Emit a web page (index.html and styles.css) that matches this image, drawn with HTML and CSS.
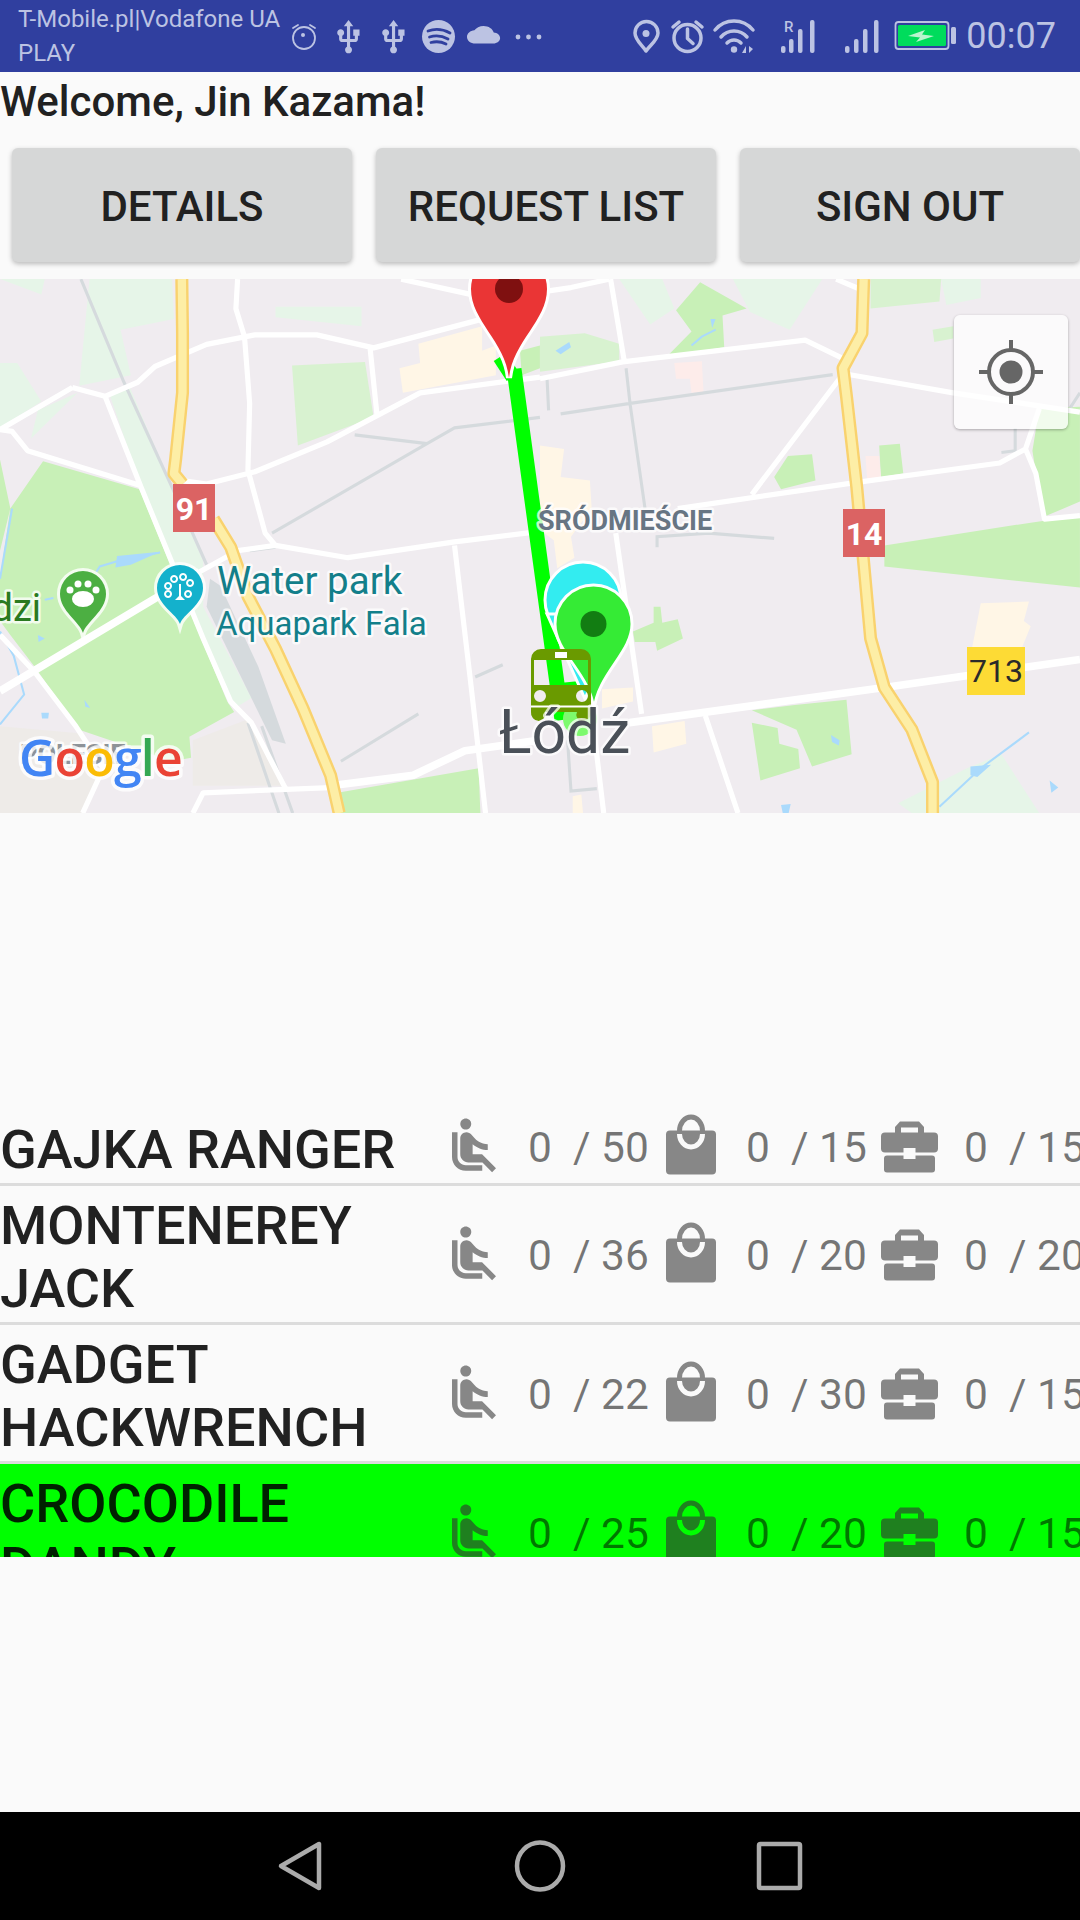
FILE: index.html
```html
<!DOCTYPE html>
<html lang="en">
<head>
<meta charset="utf-8">
<title>Driver panel</title>
<link rel="stylesheet" href="styles.css">
</head>
<body>
<svg class="defs" width="0" height="0" aria-hidden="true">
  <symbol id="seat" viewBox="0 0 24 24">
    <path class="ico" d="M7.59 5.41c-.78-.78-.78-2.05 0-2.83.78-.78 2.05-.78 2.83 0 .78.78.78 2.05 0 2.83-.79.79-2.05.79-2.83 0zM6 16V7H4v9c0 2.76 2.24 5 5 5h6v-2H9c-1.66 0-3-1.34-3-3zm14 4.07L14.93 15H11.5v-3.68c1.4 1.15 3.6 2.16 5.5 2.16v-2.16c-1.66.02-3.61-.87-4.67-2.04l-1.4-1.55c-.19-.21-.43-.38-.69-.5-.29-.14-.62-.23-.96-.23h-.03C8.01 7 7 8.01 7 9.25V15c0 1.66 1.34 3 3 3h5.07l3.5 3.5L20 20.07z"/>
  </symbol>
  <symbol id="bag" viewBox="0 0 66 66">
    <rect class="ico" x="7" y="17.5" width="50" height="44" rx="4"/>
    <path class="ico-line" d="M20.5 18A11.5 14 0 0 1 43.5 18"/>
    <path class="ico-hole" d="M20.5 21A11.5 13 0 0 0 43.5 21"/>
  </symbol>
  <symbol id="case" viewBox="0 0 66 66">
    <path class="ico" d="M18 20V14L23 8.5H42L47 14V20H41V14.500H24V20Z"/>
    <rect class="ico" x="4" y="19.500" width="57" height="20" rx="4"/>
    <rect class="ico" x="7" y="42.500" width="51" height="17" rx="3"/>
    <rect class="ico-hole-fill" x="26.500" y="35" width="12" height="11"/>
  </symbol>
</svg>

<header class="status-bar">
  <div class="carrier">T-Mobile.pl|Vodafone UA<br>PLAY</div>
  <svg class="status-left" width="260" height="72" viewBox="288 0 260 72">
    <circle class="st-line thin" cx="304" cy="38" r="11"/>
    <path class="st-line thin" d="M293 28l5-3M315 28l-5-3"/>
    <circle class="st-fill" cx="303" cy="35" r="2"/>
    <path class="st-fill" transform="translate(329.700 18.500) scale(1.570)" d="M15 7v4h1v2h-3V5h2l-3-4-3 4h2v8H8v-2.070c.7-.37 1.200-1.080 1.200-1.930 0-1.210-.99-2.200-2.200-2.200-1.210 0-2.200.99-2.200 2.200 0 .85.5 1.560 1.200 1.930V13c0 1.110.89 2 2 2h3v3.050c-.71.37-1.200 1.100-1.200 1.950 0 1.220.99 2.200 2.200 2.200 1.210 0 2.200-.98 2.200-2.200 0-.85-.49-1.580-1.200-1.950V15h3c1.110 0 2-.89 2-2v-2h1V7h-4z"/>
    <path class="st-fill" transform="translate(374.700 18.500) scale(1.570)" d="M15 7v4h1v2h-3V5h2l-3-4-3 4h2v8H8v-2.070c.7-.37 1.200-1.080 1.200-1.930 0-1.210-.99-2.200-2.200-2.200-1.210 0-2.200.99-2.200 2.200 0 .85.5 1.560 1.200 1.930V13c0 1.110.89 2 2 2h3v3.050c-.71.37-1.200 1.100-1.200 1.950 0 1.220.99 2.200 2.200 2.200 1.210 0 2.200-.98 2.200-2.200 0-.85-.49-1.580-1.200-1.950V15h3c1.110 0 2-.89 2-2v-2h1V7h-4z"/>
    <circle class="st-fill" cx="438.500" cy="36.500" r="16.500"/>
    <path class="st-cut" d="M428 31Q439 27 450 33M429.500 37Q439 34 448 39M431 42.500Q439 40.500 446 44"/>
    <path class="st-fill" transform="translate(467 21.500) scale(1.380 1.100)" d="M19.350 10.040C18.670 6.590 15.640 4 12 4 9.110 4 6.600 5.640 5.350 8.040 2.340 8.360 0 10.910 0 14c0 3.310 2.690 6 6 6h13c2.760 0 5-2.240 5-5 0-2.640-2.050-4.780-4.650-4.960z"/>
    <circle class="st-fill" cx="518" cy="37" r="2.400"/>
    <circle class="st-fill" cx="528.500" cy="37" r="2.400"/>
    <circle class="st-fill" cx="539" cy="37" r="2.400"/>
  </svg>
  <svg class="status-right" width="330" height="72" viewBox="630 0 330 72">
    <path class="st-line" d="M647 51C643 45 636 40 636 33A11.500 11.500 0 0 1 659 33C659 40 651 45 647 51Z"/>
    <circle class="st-fill" cx="647" cy="33.500" r="3.500"/>
    <circle class="st-line" cx="688.500" cy="38" r="13.500"/>
    <path class="st-line" d="M674 27l6-5M703 27l-6-5M688.500 29v9.500l5.500 5"/>
    <path class="st-line" d="M716 30C726 18 744 18 754 30M722 37C729 29 741 29 748 37M728 43C732 39 738 39 742 43"/>
    <circle class="st-fill" cx="735" cy="49.500" r="3.200"/>
    <path class="st-fill" d="M743 53l4-7v7ZM750 46l4 3-4 4Z"/>
    <text class="st-r" x="785" y="32">R</text>
    <rect class="st-fill" x="782" y="46" width="4.500" height="7" rx="2"/>
    <rect class="st-fill" x="790" y="39" width="4.500" height="14" rx="2"/>
    <rect class="st-fill" x="799" y="29" width="4.500" height="24" rx="2"/>
    <rect class="st-fill" x="811" y="20" width="4.500" height="33" rx="2"/>
    <rect class="st-fill" x="846" y="46" width="4.500" height="7" rx="2"/>
    <rect class="st-fill" x="855" y="39" width="4.500" height="14" rx="2"/>
    <rect class="st-fill" x="864" y="29" width="4.500" height="24" rx="2"/>
    <rect class="st-fill" x="875" y="20" width="4.500" height="33" rx="2"/>
    <rect class="st-line thin" x="896.500" y="22" width="53" height="27" rx="3"/>
    <rect class="bat-level" x="899" y="25" width="48" height="21" rx="1.500"/>
    <path class="bat-bolt" d="M909 36L926 30L923 34.500L935 36L917 42L921 37.500Z"/>
    <rect class="st-fill" x="952" y="27" width="5" height="17" rx="1.500"/>
  </svg>
  <div class="clock">00:07</div>
</header>

<main class="content">
  <div class="welcome">Welcome, Jin Kazama!</div>
  <nav class="actions">
    <button class="action">DETAILS</button>
    <button class="action">REQUEST LIST</button>
    <button class="action">SIGN OUT</button>
  </nav>

  <section class="map">
    <svg class="map-canvas" width="1080" height="534" viewBox="0 0 1080 534">
      <rect class="land" width="1080" height="534"/>

      <g transform="translate(0 -9) scale(0.34435 0.35088)">
        <path class="park-faint" d="M260 26L500 26L505 140L350 170L380 300L230 330ZM800 105L1050 105L1050 160L800 135ZM320 360L375 330L590 830L590 960L730 1220L680 1250L410 620ZM90 480L225 350L110 400ZM0 265L50 265L120 375L0 450ZM0 26L130 26L120 70Z"/>
        <path class="park-mid" d="M848 272L1060 262L1085 420L865 500Z"/>
        <path class="park" d="M125 545L405 625L490 830L660 1230L680 1260L550 1330L555 1390L500 1400L230 1310L100 1130L30 1040L0 1000L0 880L30 680ZM0 540L30 680L0 800ZM980 1490L1390 1420L1395 1548L990 1548ZM1510 230L1568 215L1568 280L1515 300Z"/>
        <path class="grey-land" d="M0 1300L230 1320L300 1400L240 1548L0 1548ZM560 1340L720 1280L820 1470L560 1470Z"/>
        <path class="building" d="M1160 280L1220 265L1215 210L1400 160L1400 230L1440 215L1440 300L1170 350Z"/>
        <path class="rail-area" d="M610 880L640 900L750 1130L830 1350L790 1340L690 1140L600 960Z"/>
        <path class="rail" d="M760 1300L850 1548M720 1290L810 1548"/>
        <path class="water-line" d="M35 680L0 880M280 860L290 845L340 830L465 805M0 1295L70 1210L40 1100L0 1030M130 940L155 935"/>
        <path class="water" d="M340 815L465 803L380 840L335 848ZM120 1262L142 1262L140 1278L122 1278ZM245 1225L262 1248L248 1245ZM110 1040L130 1050L112 1060Z"/>
        <path class="rail" d="M235 26L360 320L500 620L600 840M1030 470L1240 495M790 750L1240 495L1320 450L1568 420M990 1400L1215 1265M1380 1160L1460 1125M725 800L800 790"/>
        <path class="road" d="M210 335L0 455L35 460L80 515L410 615M210 335L305 360L400 320L450 275L600 212L740 185L920 185L1085 222L1400 140M305 360L410 620L590 1050L670 1230L730 1290L830 1480M690 26L685 110L710 190L725 380L720 570L770 750L800 785M1075 225L1095 415M1095 415L1220 350L1568 305M1095 415L950 490L740 575L600 610L530 600M800 785L1010 820L1320 775L1568 745M800 785L690 800L580 860M1320 785L1365 1160L1410 1548M0 1040L100 1145L220 1300L300 1420L240 1548M1165 26L1370 70M560 1548L590 1490L960 1475"/>
        <path class="road wide" d="M580 860L0 1200M960 1470L1200 1440L1350 1370L1568 1340"/>
        <path class="motorway-edge" d="M528 26L530 180L530 350L510 540L505 580L530 610M620 710L670 790L720 930L800 1080L880 1250L960 1440L985 1548"/>
        <path class="motorway" d="M528 26L530 180L530 350L510 540L505 580L530 610M620 710L670 790L720 930L800 1080L880 1250L960 1440L985 1548"/>
      </g>

      <g transform="translate(540 -9) scale(0.34435 0.35088)">
        <path class="park-faint" d="M230 26L355 26L390 110L320 155ZM560 26L820 26L725 170L610 120ZM1165 26L1280 26L1280 80L1180 100ZM1040 1520L1240 1420L1340 1380L1450 1548L1080 1548Z"/>
        <path class="park-mid" d="M960 26L1165 26L1160 90L960 110ZM1140 170L1200 160L1200 195L1145 205ZM0 190L130 180L230 210L230 260L0 290Z"/>
        <path class="park" d="M395 115L465 35L600 110L530 130L535 220L370 245L440 175ZM680 590L720 530L790 525L800 600L700 625ZM985 500L1045 495L1055 580L990 590ZM1000 785L1425 720L1568 700L1568 905L1000 845ZM1430 515L1450 395L1568 390L1568 660L1460 705ZM270 1030L330 1005L330 960L350 960L355 1005L400 995L415 1050L340 1085L335 1060L275 1060ZM615 1255L740 1240L890 1225L905 1380L790 1415L745 1310ZM615 1290L690 1305L695 1350L750 1365L755 1420L640 1455Z"/>
        <path class="building" d="M1280 950L1420 945L1405 1000L1425 1015L1400 1075L1255 1075ZM325 1300L420 1285L425 1350L330 1375ZM0 500L70 510L60 590L145 600L150 680L90 760L100 820L50 850L40 770L0 740ZM180 1195L270 1190L270 1230L180 1250ZM95 1500L120 1495L125 1548L95 1548Z"/>
        <path class="blush" d="M390 265L470 260L475 350L440 350L435 310L395 310ZM945 530L985 530L990 590L950 595Z"/>
        <path class="water" d="M845 1325L870 1340L868 1355L848 1345ZM1480 1455L1505 1475L1485 1490ZM1250 1415L1310 1410L1270 1445L1250 1440ZM45 230L85 205L90 220L60 240ZM700 1525L728 1522L722 1548L705 1548ZM495 140L510 140L500 165Z"/>
        <path class="water-line" d="M510 170L470 190L440 215M1160 1530L1280 1420L1420 1318"/>
        <path class="rail" d="M250 280L262 385L305 680M60 410L262 380L850 298M340 790L340 760L490 750L680 765M1380 450L1380 515L1340 520M20 300L25 400M80 1340L90 1485L165 1478M1568 350L1540 392"/>
        <path class="road" d="M0 310L240 262L770 200L885 255M205 26L245 262M885 290L615 640M880 295L1200 350L1568 405M400 680L920 605L1335 550L1410 510L1440 580L1465 710L1568 700M1410 510L1450 395M220 750L295 1265M480 1270L575 1548M155 1300L185 1548M20 60L90 50L200 26M860 26L930 55"/>
        <path class="road wide" d="M260 1290L1000 1190L1568 1110"/>
        <path class="motorway-edge" d="M940 26L935 180L880 280L890 360L920 620L960 1050L1000 1190L1080 1310L1140 1460L1140 1548"/>
        <path class="motorway" d="M940 26L935 180L880 280L890 360L920 620L960 1050L1000 1190L1080 1310L1140 1460L1140 1548"/>
      </g>

      <path class="route" d="M500 78L513 98M514 90L562 441"/>
      <path class="route-thin" d="M560 408L580 406"/>
      <circle class="route-end" cx="580" cy="440" r="17"/>

      <g>
        <path class="halo" d="M509 99C505 62 471 42 471 10A38 38 0 0 1 547 10C547 42 513 62 509 99Z"/>
        <path class="pin-red" d="M509 99C505 62 471 42 471 10A38 38 0 0 1 547 10C547 42 513 62 509 99Z"/>
        <circle class="dot-red" cx="509" cy="10" r="14"/>
        <circle class="pin-cyan" cx="583" cy="321" r="38"/>
        <path class="pin-cyan" d="M547 335L585 420L620 335Z"/>
        <path class="pin-green" d="M594 431C590 394 555 374 555 345A38.500 39 0 0 1 632 345C632 374 598 394 594 431Z"/>
        <circle class="dot-green" cx="593.500" cy="345" r="13"/>
        <path class="bus" fill-rule="evenodd" d="M541 370H581A10 10 0 0 1 591 380V433A8 8 0 0 1 583 442H580A7 7 0 0 1 577 433H545A7 7 0 0 1 538 442H539A8 8 0 0 1 531 433V380A10 10 0 0 1 541 370ZM534 381V406H588V381ZM540 411A6 6 0 1 0 540 423A6 6 0 1 0 540 411ZM582 411A6 6 0 1 0 582 423A6 6 0 1 0 582 411Z"/>
        <rect class="bus-gap" x="531" y="426.500" width="60" height="2"/>
        <rect class="bus-plate" x="555" y="373" width="12" height="6"/>
      </g>

      <g transform="translate(83 315)">
        <path class="pin-poi-halo" d="M0 39C-3 28-23 17-23 0A23 23 0 0 1 23 0C23 17 3 28 0 39Z"/>
        <path class="pin-poi-green" d="M0 39C-3 28-23 17-23 0A23 23 0 0 1 23 0C23 17 3 28 0 39Z"/>
        <ellipse class="white" cx="0" cy="5" rx="11" ry="8"/>
        <circle class="white" cx="-13" cy="-4" r="3.500"/>
        <circle class="white" cx="-5" cy="-10" r="3.500"/>
        <circle class="white" cx="5" cy="-10" r="3.500"/>
        <circle class="white" cx="13" cy="-4" r="3.500"/>
      </g>
      <g transform="translate(180 309)">
        <path class="pin-poi-halo" d="M0 36C-3 26-23 17-23 0A23 23 0 0 1 23 0C23 17 3 26 0 36Z"/>
        <path class="pin-poi-teal" d="M0 36C-3 26-23 17-23 0A23 23 0 0 1 23 0C23 17 3 26 0 36Z"/>
        <path class="tree-line" d="M-12-5A3 3 0 1 0-11.900-5ZM-6-12A3 3 0 1 0-5.900-12ZM3-14A3 3 0 1 0 3.100-14ZM10-8A3 3 0 1 0 10.100-8ZM8 3A3 3 0 1 0 8.100 3ZM-12 3A3 3 0 1 0-11.900 3Z"/>
        <path class="white" d="M-1-4H1V8L5 12H-5L-1 8Z"/>
      </g>

      <text class="lbl lbl-dzi" x="41" y="342" text-anchor="end">dzi</text>
      <text class="lbl lbl-water" x="217" y="315">Water park</text>
      <text class="lbl lbl-aqua" x="216" y="356">Aquapark Fala</text>
      <text class="lbl lbl-dist" x="538" y="251">ŚRÓDMIEŚCIE</text>
      <text class="lbl lbl-dist lbl-pol" x="20" y="485">POLESIE</text>
      <text class="lbl lbl-city" x="499" y="474">Łódź</text>

      <rect class="shield-red" x="173" y="205" width="42" height="48"/>
      <text class="shield-text" x="194" y="241" text-anchor="middle">91</text>
      <rect class="shield-red" x="843" y="230" width="42" height="48"/>
      <text class="shield-text" x="864" y="266" text-anchor="middle">14</text>
      <rect class="shield-yellow" x="967" y="368" width="58" height="48"/>
      <text class="shield-dark" x="996" y="403" text-anchor="middle">713</text>

      <text class="google" x="19" y="497"><tspan class="g-blue">G</tspan><tspan class="g-red">o</tspan><tspan class="g-yellow">o</tspan><tspan class="g-blue">g</tspan><tspan class="g-green">l</tspan><tspan class="g-red">e</tspan></text>
    </svg>
    <button class="locate" aria-label="My location">
      <svg width="64" height="64" viewBox="0 0 64 64">
        <circle class="loc-ring" cx="32" cy="32" r="22"/>
        <circle class="loc-dot" cx="32" cy="32" r="11.500"/>
        <path class="loc-ticks" d="M32 0V10M32 54V64M0 32H10M54 32H64"/>
      </svg>
    </button>
  </section>

  <section class="vehicles">
    <article class="vehicle">
      <h2 class="name">GAJKA RANGER</h2>
      <div class="stats">
        <div class="stat"><svg class="stat-ico"><use href="#seat"/></svg><span class="count">0  / 50</span></div>
        <div class="stat"><svg class="stat-ico"><use href="#bag"/></svg><span class="count">0  / 15</span></div>
        <div class="stat"><svg class="stat-ico"><use href="#case"/></svg><span class="count">0  / 15</span></div>
      </div>
    </article>
    <article class="vehicle">
      <h2 class="name">MONTENEREY JACK</h2>
      <div class="stats">
        <div class="stat"><svg class="stat-ico"><use href="#seat"/></svg><span class="count">0  / 36</span></div>
        <div class="stat"><svg class="stat-ico"><use href="#bag"/></svg><span class="count">0  / 20</span></div>
        <div class="stat"><svg class="stat-ico"><use href="#case"/></svg><span class="count">0  / 20</span></div>
      </div>
    </article>
    <article class="vehicle">
      <h2 class="name">GADGET HACKWRENCH</h2>
      <div class="stats">
        <div class="stat"><svg class="stat-ico"><use href="#seat"/></svg><span class="count">0  / 22</span></div>
        <div class="stat"><svg class="stat-ico"><use href="#bag"/></svg><span class="count">0  / 30</span></div>
        <div class="stat"><svg class="stat-ico"><use href="#case"/></svg><span class="count">0  / 15</span></div>
      </div>
    </article>
    <article class="vehicle selected">
      <h2 class="name">CROCODILE DANDY</h2>
      <div class="stats">
        <div class="stat"><svg class="stat-ico"><use href="#seat"/></svg><span class="count">0  / 25</span></div>
        <div class="stat"><svg class="stat-ico"><use href="#bag"/></svg><span class="count">0  / 20</span></div>
        <div class="stat"><svg class="stat-ico"><use href="#case"/></svg><span class="count">0  / 15</span></div>
      </div>
    </article>
  </section>
</main>

<footer class="nav-bar">
  <svg width="48" height="52" viewBox="0 0 48 52"><path class="nav-ico" d="M43 4V48L5 26Z"/></svg>
  <svg width="52" height="52" viewBox="0 0 52 52"><ellipse class="nav-ico" cx="26" cy="26" rx="23" ry="23.500"/></svg>
  <svg width="48" height="52" viewBox="0 0 48 52"><rect class="nav-ico" x="3" y="4" width="41" height="44" rx="1.500"/></svg>
</footer>
</body>
</html>
```

FILE: styles.css
```css
* { box-sizing: border-box; }

html, body { margin: 0; padding: 0; }

body {
  width: 1080px;
  height: 1920px;
  overflow: hidden;
  display: flex;
  flex-direction: column;
  background: #fafafa;
  color: #212121;
  font-family: Roboto, "Liberation Sans", sans-serif;
}

.defs { position: absolute; }

/* status bar */
.status-bar {
  flex: 0 0 72px;
  display: flex;
  align-items: center;
  padding-left: 18px;
  background: #303f9f;
  color: #bcc3e3;
}
.carrier {
  flex: 0 0 270px;
  font-size: 24px;
  line-height: 34px;
  white-space: nowrap;
}
.status-left { flex: none; }
.status-right { flex: none; margin-left: auto; }
.clock {
  flex: none;
  margin-left: 7px;
  margin-right: 24px;
  font-size: 36px;
  font-weight: 400;
}
.st-fill { fill: #bcc3e3; }
.st-line { fill: none; stroke: #bcc3e3; stroke-width: 3.500; stroke-linecap: round; stroke-linejoin: round; }
.st-line.thin { stroke-width: 1.800; }
.st-cut { fill: none; stroke: #303f9f; stroke-width: 2.800; stroke-linecap: round; }
.st-r { fill: #bcc3e3; font-size: 15px; font-weight: 500; }
.bat-level { fill: #00dc5c; }
.bat-bolt { fill: #b9f5cf; }

/* greeting and buttons */
.content { flex: 1; display: flex; flex-direction: column; min-height: 0; }
.welcome {
  padding-top: 5px;
  font-size: 42px;
  font-weight: 500;
  line-height: 49px;
  white-space: nowrap;
}
.actions {
  display: flex;
  gap: 24px;
  padding: 22px 0 17px 12px;
}
.action {
  flex: 0 0 340px;
  height: 114px;
  border: 0;
  border-radius: 6px;
  padding: 2px 0 0;
  background: #d6d7d7;
  box-shadow: 0 2px 5px rgba(0, 0, 0, .26);
  color: #212121;
  font: 500 42px Roboto, sans-serif;
}

/* map */
.map { position: relative; height: 534px; flex: none; overflow: hidden; }
.map-canvas { display: block; }
.land { fill: #f0ecf0; }
.park { fill: #c8f0b7; }
.park-mid { fill: #d8f2d0; }
.park-faint { fill: #e6f5e8; }
.grey-land { fill: #eeebe8; }
.building { fill: #fff6e6; }
.blush { fill: #fdecea; }
.water { fill: #aadafc; }
.water-line { fill: none; stroke: #aadafc; stroke-width: 6; }
.rail { fill: none; stroke: #d5dadd; stroke-width: 9; }
.rail-area { fill: #d5dadd; }
.road { fill: none; stroke: #fff; stroke-width: 15; stroke-linejoin: round; }
.road.wide { stroke-width: 22; }
.motorway-edge { fill: none; stroke: #f9d26e; stroke-width: 38; stroke-linejoin: round; }
.motorway { fill: none; stroke: #fdeea6; stroke-width: 24; stroke-linejoin: round; }

.route { fill: none; stroke: #0f0; stroke-width: 15; }
.route-thin { fill: none; stroke: #0f0; stroke-width: 8; }
.route-end { fill: #7dfa6e; }
.halo { fill: #fff; stroke: #fff; stroke-width: 6; }
.pin-red { fill: #ea3535; }
.dot-red { fill: #7f1010; }
.pin-cyan { fill: #33ecf0; stroke: #fff; stroke-width: 3; }
.pin-green { fill: #35eb35; stroke: #fff; stroke-width: 3; }
.dot-green { fill: #127d12; }
.bus { fill: #6a9a00; }
.bus-gap { fill: #fff; }
.bus-plate { fill: #fff; }
.pin-poi-halo { fill: #fff; stroke: #fff; stroke-width: 6; opacity: .8; }
.pin-poi-green { fill: #4caf42; }
.pin-poi-teal { fill: #14b1cc; }
.white { fill: #fff; }
.tree-line { fill: none; stroke: #fff; stroke-width: 2; }

.lbl {
  font-family: Roboto, sans-serif;
  paint-order: stroke;
  stroke: rgba(255, 255, 255, .75);
  stroke-width: 5px;
  stroke-linejoin: round;
}
.lbl-dzi { fill: #2a7a1f; font-size: 38px; }
.lbl-water { fill: #137f8a; font-size: 38.500px; }
.lbl-aqua { fill: #137f8a; font-size: 33px; }
.lbl-dist { fill: #677583; font-size: 27px; font-weight: 700; }
.lbl-pol { fill: #8e9398; }
.lbl-city { fill: #4a5058; font-size: 60.500px; }
.shield-red { fill: #db6363; }
.shield-yellow { fill: #fddb35; }
.shield-text { fill: #fff; font: 700 32px Roboto, sans-serif; }
.shield-dark { fill: #2a2a2a; font: 400 32px Roboto, sans-serif; }

.google {
  font: 600 50px "Open Sans", sans-serif;
  letter-spacing: -.8px;
  paint-order: stroke;
  stroke: rgba(255, 255, 255, .8);
  stroke-width: 7px;
  stroke-linejoin: round;
}
.g-blue { fill: #4285f4; }
.g-red { fill: #ea4335; }
.g-yellow { fill: #fbbc05; }
.g-green { fill: #34a853; }

.locate {
  position: absolute;
  top: 36px;
  right: 12px;
  width: 114px;
  height: 114px;
  padding: 0;
  border: 0;
  border-radius: 6px;
  display: flex;
  align-items: center;
  justify-content: center;
  background: rgba(255, 255, 255, .75);
  box-shadow: 0 1px 3px rgba(0, 0, 0, .3);
}
.loc-ring { fill: none; stroke: #666; stroke-width: 4; }
.loc-dot { fill: #666; }
.loc-ticks { fill: none; stroke: #666; stroke-width: 4; }

/* vehicle list */
.vehicles {
  flex: none;
  height: 447px;
  margin-top: 297px;
  overflow: hidden;
}
.vehicle {
  --ico: #878787;
  --hole: #fafafa;
  display: flex;
  align-items: center;
  padding: 8px 0 2px;
  border-bottom: 3px solid #dcdcdc;
}
.vehicle.selected {
  --ico: #1f801f;
  --hole: #0f0;
  border-bottom: 0;
  background: #0f0;
}
.name {
  flex: 0 0 441px;
  margin: 0;
  font-size: 54px;
  font-weight: 500;
  line-height: 63px;
  color: rgba(0, 0, 0, .87);
}
.stats {
  flex: none;
  display: flex;
  margin: -8px 0 -1px;
}
.stat {
  flex: 0 0 218px;
  display: flex;
  align-items: center;
  gap: 21px;
}
.stat-ico { flex: none; width: 66px; height: 66px; }
.count {
  margin-top: 3px;
  font-size: 42.500px;
  white-space: pre;
  color: rgba(0, 0, 0, .54);
}
.ico { fill: var(--ico); }
.ico-line { fill: none; stroke: var(--ico); stroke-width: 5; }
.ico-hole { fill: none; stroke: var(--hole); stroke-width: 5; }
.ico-hole-fill { fill: var(--hole); }

/* navigation bar */
.nav-bar {
  flex: 0 0 108px;
  display: flex;
  align-items: center;
  justify-content: center;
  gap: 190px;
  background: #000;
}
.nav-ico {
  fill: none;
  stroke: #ababab;
  stroke-width: 4.500;
  stroke-linejoin: round;
}
```
